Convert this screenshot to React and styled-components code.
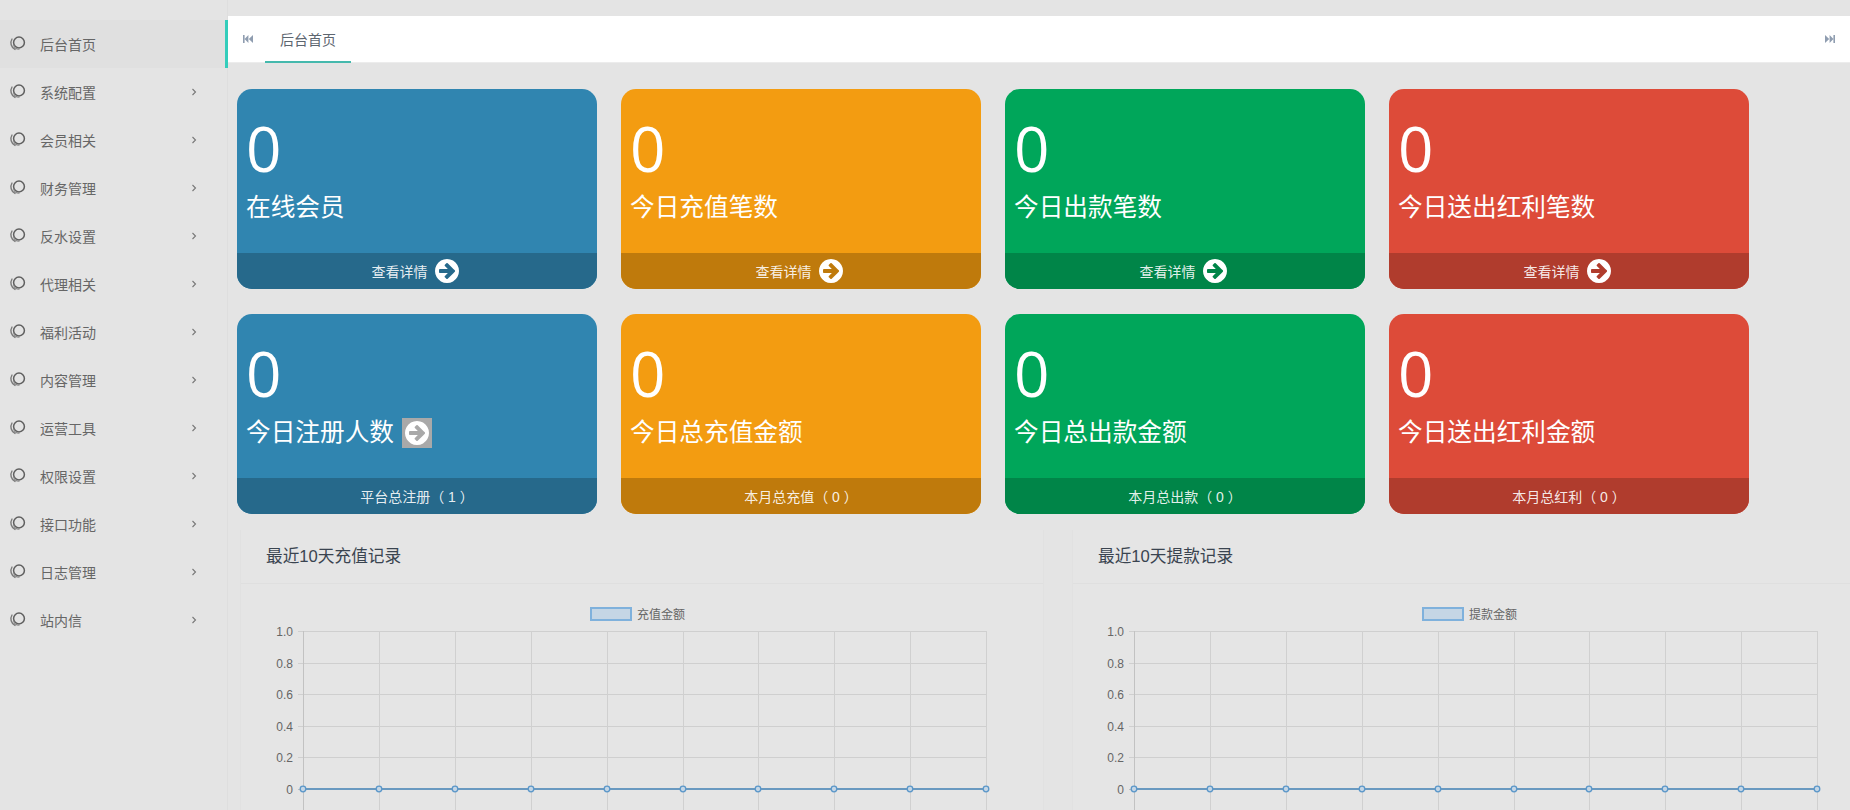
import React from 'react';
import styled, { createGlobalStyle } from 'styled-components';

const Global = createGlobalStyle`
  html, body { margin: 0; padding: 0; height: 810px; overflow: hidden; background: #e4e4e4; }
  * { box-sizing: border-box; }
  body { font-family: "Liberation Sans", "Noto Sans CJK SC", sans-serif; }
`;

const Page = styled.div`
  display: flex;
  width: 1850px;
  height: 810px;
  overflow: hidden;
`;

const Sidebar = styled.nav`
  flex: none;
  width: 228px;
  padding-top: 20px;
  background: #e4e4e4;
  border-right: 1px solid #dedede;
`;

const NavItem = styled.div`
  position: relative;
  display: flex;
  align-items: center;
  height: 48px;
  padding: 0 31px 0 9px;
  font-size: 14px;
  color: #666;
  background: ${p => (p.$active ? '#e0e0e0' : 'transparent')};
  border-right: ${p => (p.$active ? '3px solid #33cdbb' : '0')};
  margin-right: -1px;
`;

const NavIcon = styled.svg`
  flex: none;
  width: 17px;
  height: 16px;
  margin: -2px 14px 0 0;
`;

const NavLabel = styled.span`
  flex: 1;
`;

const Chevron = styled.svg`
  flex: none;
  width: 6px;
  height: 8px;
`;

const Main = styled.main`
  flex: 1;
  min-width: 0;
  padding-top: 16px;
`;

const TabBar = styled.div`
  display: flex;
  align-items: center;
  height: 47px;
  background: #fff;
  border-bottom: 1px solid #ececec;
  padding: 0 15px;
`;

const TabArrow = styled.svg`
  flex: none;
  width: 10px;
  height: 8px;
  margin-top: -1px;
  transform: ${p => (p.$flip ? 'scaleX(-1)' : 'none')};
`;

const Tab = styled.div`
  height: 47px;
  line-height: 48px;
  margin-left: 12px;
  padding: 0 15px;
  font-size: 14px;
  color: #5d6670;
  border-bottom: 2px solid #45b9ad;
`;

const TabSpacer = styled.div`
  flex: 1;
`;

const Content = styled.div`
  padding: 26px 0 0 9px;
`;

const CardGrid = styled.div`
  display: grid;
  grid-template-columns: repeat(4, 360px);
  column-gap: 24px;
  row-gap: 25px;
`;

const Card = styled.div`
  display: flex;
  flex-direction: column;
  height: 200px;
  border-radius: 15px;
  overflow: hidden;
  color: #fff;
  background: ${p => p.$bg};
`;

const CardBody = styled.div`
  flex: 1;
  padding: 24px 9px 0 10px;
`;

const Count = styled.div`
  font-family: "Open Sans", "Liberation Sans", sans-serif;
  font-size: 62px;
  line-height: 70px;
  height: 70px;
  margin-left: -1px;
`;

const CardLabel = styled.div`
  display: flex;
  align-items: center;
  gap: 8px;
  margin-top: 8px;
  margin-left: -1px;
  font-size: 24.67px;
  line-height: 34px;
  height: 34px;
`;

const BrokenIcon = styled.span`
  display: inline-flex;
  align-items: center;
  justify-content: center;
  width: 30px;
  height: 30px;
  background: #a9a9a9;
`;

const CardFooter = styled.div`
  flex: none;
  display: flex;
  align-items: center;
  justify-content: center;
  gap: 7px;
  height: 36px;
  padding-right: ${p => (p.$shift ? 4 : 0)}px;
  font-size: 14px;
  color: rgba(255, 255, 255, 0.9);
  background: ${p => p.$bg};
`;

const ArrowGlyph = styled.svg`
  flex: none;
  width: 24px;
  height: 24px;
  fill: #fff;
`;

const Panels = styled.div`
  display: flex;
  gap: 28px;
  margin-top: 16px;
  margin-left: 3px;
`;

const Panel = styled.section`
  flex: none;
  width: ${p => p.$w}px;
  background: #e5e5e5;
  border-left: 1px solid #e1e1e1;
  border-right: 1px solid #e1e1e1;
`;

const PanelHead = styled.h3`
  margin: 0;
  height: 54px;
  padding: 2px 25px 0;
  font-size: 16.67px;
  font-weight: 400;
  line-height: 50px;
  color: #3a4450;
  border-bottom: 1px solid #dfdfdf;
`;

const ChartSvg = styled.svg`
  display: block;
`;

const ChartText = styled.text`
  font-family: "Liberation Sans", "Noto Sans CJK SC", sans-serif;
  font-size: 12px;
  fill: #666;
`;

const nav = ['后台首页', '系统配置', '会员相关', '财务管理', '反水设置', '代理相关', '福利活动', '内容管理', '运营工具', '权限设置', '接口功能', '日志管理', '站内信'];

const top = [
  ['在线会员', '#3085b0', '#26698b'],
  ['今日充值笔数', '#f39c11', '#bf7a0c'],
  ['今日出款笔数', '#00a65a', '#008548'],
  ['今日送出红利笔数', '#dd4b39', '#b03c2d'],
];
const bottom = [
  ['今日注册人数', '#3085b0', '#26698b', '平台总注册（ 1 ）'],
  ['今日总充值金额', '#f39c11', '#bf7a0c', '本月总充值（ 0 ）'],
  ['今日总出款金额', '#00a65a', '#008548', '本月总出款（ 0 ）'],
  ['今日送出红利金额', '#dd4b39', '#b03c2d', '本月总红利（ 0 ）'],
];

const Ring = () => (
  <NavIcon viewBox="0 0 17 16" fill="none">
    <circle cx="10" cy="7.5" r="5.4" stroke="#5f5f5f" strokeWidth="1.5" />
    <path d="M3 4C0.8 7.6 2 12.4 6 14.4" stroke="#7a7a7a" strokeWidth="1.4" strokeLinecap="round" />
    <path d="M4.8 10.5C5.4 12.8 7.6 14.2 10 14.2" stroke="#8a8a8a" strokeWidth="1.1" strokeLinecap="round" />
  </NavIcon>
);

const SkipIcon = ({ flip }) => (
  <TabArrow viewBox="0 0 10 8" $flip={flip}>
    <path d="M0 0h1.6v8H0zM5.4 0v8L1.6 4zM10 0v8L5.8 4z" fill="#8f9db0" />
  </TabArrow>
);

const ArrowCircle = () => (
  <ArrowGlyph viewBox="0 128 1536 1536">
    <path
      fillRule="evenodd"
      d="M1285 896q0-27-18-45l-91-91-362-362q-18-18-45-18t-45 18l-91 91q-18 18-18 45t18 45l189 189h-502q-26 0-45 19t-19 45v128q0 26 19 45t45 19h502l-189 189q-19 19-19 45t19 45l91 91q18 18 45 18t45-18l362-362 91-91q18-18 18-45zm251 0q0 209-103 385.5t-279.5 279.5-385.5 103-385.5-103-279.5-279.5-103-385.5 103-385.5 279.5-279.5 385.5-103 385.5 103 279.5 279.5 103 385.5z"
    />
  </ArrowGlyph>
);

const PLOT_TOP = 47;
const ROW = 31.6;
const COL = 75.9;
const labels = ['1.0', '0.8', '0.6', '0.4', '0.2', '0'];

const Chart = ({ plotX, legendX, label, width }) => {
  const xs = Array.from({ length: 10 }, (_, i) => Math.round(plotX + i * COL));
  const right = xs[9];
  const zero = PLOT_TOP + ROW * 5;
  return (
    <ChartSvg width={width} height={226} viewBox={`0 0 ${width} 226`}>
      <rect x={legendX + 1} y={24} width={40} height={12} fill="#c5d6e5" stroke="#7fb1dc" strokeWidth="2" />
      <ChartText x={legendX + 47} y={34.5}>{label}</ChartText>
      {labels.map((t, i) => {
        const y = Math.round(PLOT_TOP + ROW * i) + 0.5;
        return (
          <g key={t}>
            {i < 5 && <line x1={plotX - 5} x2={right} y1={y} y2={y} stroke="#cfcfcf" />}
            {i === 5 && <line x1={plotX - 5} x2={plotX} y1={y} y2={y} stroke="#bdbdbd" />}
            <ChartText x={plotX - 10} y={y + 4} textAnchor="end">{t}</ChartText>
          </g>
        );
      })}
      {xs.map((x, i) => (
        <line key={x} x1={x + 0.5} x2={x + 0.5} y1={PLOT_TOP} y2={226} stroke={i === 0 ? '#c2c2c2' : '#d0d0d0'} />
      ))}
      <line x1={plotX} x2={right} y1={zero} y2={zero} stroke="#3f7fb3" strokeWidth="1.5" />
      {xs.map(x => (
        <circle key={x} cx={x} cy={zero} r="2.8" fill="#c5d6e5" stroke="#5b97c9" strokeWidth="1.3" />
      ))}
    </ChartSvg>
  );
};

export default function App() {
  return (
    <>
      <Global />
      <Page>
        <Sidebar>
          {nav.map((n, i) => (
            <NavItem key={n} $active={i === 0}>
              <Ring />
              <NavLabel>{n}</NavLabel>
              {i > 0 && (
                <Chevron viewBox="0 0 6 8" fill="none">
                  <path d="M1.5 1l3 3-3 3" stroke="#777" strokeWidth="1.1" />
                </Chevron>
              )}
            </NavItem>
          ))}
        </Sidebar>
        <Main>
          <TabBar>
            <SkipIcon />
            <Tab>后台首页</Tab>
            <TabSpacer />
            <SkipIcon flip />
          </TabBar>
          <Content>
            <CardGrid>
              {top.map(([t, bg, fb]) => (
                <Card key={t} $bg={bg}>
                  <CardBody>
                    <Count>0</Count>
                    <CardLabel>{t}</CardLabel>
                  </CardBody>
                  <CardFooter $bg={fb} $shift>
                    查看详情
                    <ArrowCircle />
                  </CardFooter>
                </Card>
              ))}
              {bottom.map(([t, bg, fb, f], i) => (
                <Card key={t} $bg={bg}>
                  <CardBody>
                    <Count>0</Count>
                    <CardLabel>
                      {t}
                      {i === 0 && (
                        <BrokenIcon>
                          <ArrowCircle />
                        </BrokenIcon>
                      )}
                    </CardLabel>
                  </CardBody>
                  <CardFooter $bg={fb}>{f}</CardFooter>
                </Card>
              ))}
            </CardGrid>
            <Panels>
              <Panel $w={804}>
                <PanelHead>最近10天充值记录</PanelHead>
                <Chart plotX={62} legendX={349} label="充值金额" width={802} />
              </Panel>
              <Panel $w={800}>
                <PanelHead>最近10天提款记录</PanelHead>
                <Chart plotX={61} legendX={349} label="提款金额" width={798} />
              </Panel>
            </Panels>
          </Content>
        </Main>
      </Page>
    </>
  );
}
